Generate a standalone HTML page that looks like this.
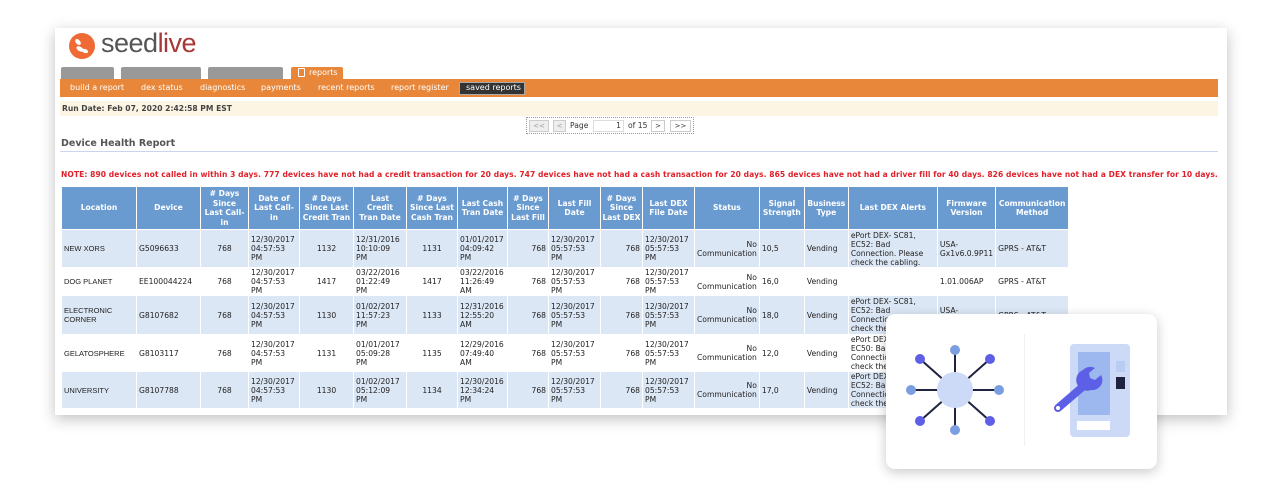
<!DOCTYPE html>
<html><head><meta charset="utf-8">
<style>
*{margin:0;padding:0;box-sizing:border-box}
body{width:1282px;height:488px;background:#fff;position:relative;overflow:hidden;font-family:"DejaVu Sans","Liberation Sans",sans-serif}
.panel{position:absolute;left:55px;top:28px;width:1172px;height:387px;background:#fff;box-shadow:0 4px 14px rgba(0,0,0,.25)}
.a{position:absolute}
.tab{position:absolute;top:67px;height:12px;background:#999;border-radius:2px 2px 0 0}
.orange{position:absolute;left:60px;top:79px;width:1158px;height:18px;background:#e8873a}
.nav{position:absolute;top:83px;font-size:8px;color:#fff;font-family:"DejaVu Sans",sans-serif}
table{position:absolute;left:61px;top:186px;border-collapse:collapse;table-layout:fixed;font-size:7.6px;color:#222}
td,th{border:1px solid #fff;padding:0 2px;line-height:9px;vertical-align:middle}
th{background:#6a9bd0;color:#fff;font-weight:bold;text-align:center;height:43px;line-height:9.5px;padding:0 1px}
tr.o td{background:#dce7f6}
td.r{text-align:right}td.c{text-align:center}
.sm{font-family:"Liberation Sans",sans-serif;font-size:7.5px}
</style></head><body>
<div class="panel"></div>
<svg class="a" style="left:68px;top:32px" width="28" height="28" viewBox="0 0 28 28"><circle cx="14" cy="14" r="13" fill="#ef6a35"/><ellipse cx="10" cy="10" rx="2.2" ry="3.5" transform="rotate(-40 10 10)" fill="#fff"/><ellipse cx="12" cy="17" rx="2.2" ry="4" transform="rotate(-60 12 17)" fill="#fff"/><ellipse cx="17" cy="19" rx="2" ry="3.2" transform="rotate(-70 17 19)" fill="#fff"/></svg>
<div class="a" style="left:101px;top:28px;font-family:'Liberation Sans',sans-serif;font-size:27px;color:#555;letter-spacing:-0.5px">seed<span style="color:#a83838">live</span></div>
<div class="tab" style="left:61px;width:53px"></div>
<div class="tab" style="left:121px;width:80px"></div>
<div class="tab" style="left:208px;width:75px"></div>
<div class="tab" style="left:291px;width:52px;background:#e8873a;height:13px"></div>
<div class="a" style="left:298px;top:68px;width:7px;height:9px;border:1px solid #fff;border-radius:1px"></div>
<div class="a" style="left:309px;top:68px;font-size:8px;color:#fff">reports</div>
<div class="orange"></div>
<div class="nav" style="left:70px">build a report</div>
<div class="nav" style="left:141px">dex status</div>
<div class="nav" style="left:200px">diagnostics</div>
<div class="nav" style="left:261px">payments</div>
<div class="nav" style="left:318px">recent reports</div>
<div class="nav" style="left:391px">report register</div>
<div class="a" style="left:459px;top:82px;width:66px;height:13px;background:#333;border:1px solid #aaa;border-radius:1px"></div>
<div class="nav" style="left:466px">saved reports</div>
<div class="a" style="left:60px;top:101px;width:1158px;height:15px;background:#fdf5e4"></div>
<div class="a" style="left:62px;top:104px;font-size:7.6px;font-weight:bold;color:#444">Run Date: Feb 07, 2020 2:42:58 PM EST</div>
<div class="a" style="left:526px;top:117px;width:168px;height:17px;border:1px dotted #999"></div>
<div class="a" style="left:529px;top:120px;width:20px;height:12px;background:#eee;border:1px solid #ccc;font-size:7px;color:#999;text-align:center;line-height:10px">&lt;&lt;</div>
<div class="a" style="left:553px;top:120px;width:13px;height:12px;background:#eee;border:1px solid #ccc;font-size:7px;color:#999;text-align:center;line-height:10px">&lt;</div>
<div class="a" style="left:570px;top:121px;font-size:7.6px;color:#333">Page</div>
<div class="a" style="left:593px;top:120px;width:31px;height:12px;border:1px solid #ddd;font-size:7.6px;color:#333;text-align:right;padding-right:2px;line-height:10px">1</div>
<div class="a" style="left:628px;top:121px;font-size:7.6px;color:#333">of 15</div>
<div class="a" style="left:651px;top:120px;width:14px;height:12px;border:1px solid #ccc;font-size:7px;color:#333;text-align:center;line-height:10px">&gt;</div>
<div class="a" style="left:670px;top:120px;width:21px;height:12px;border:1px solid #ccc;font-size:7px;color:#333;text-align:center;line-height:10px">&gt;&gt;</div>
<div class="a" style="left:61px;top:138px;font-size:9.5px;font-weight:bold;color:#555">Device Health Report</div>
<div class="a" style="left:60px;top:151px;width:1158px;height:1px;background:#c9d6ee"></div>
<div class="a" style="left:61px;top:170px;font-size:7.55px;letter-spacing:0.075px;font-weight:bold;color:#e0202a;white-space:nowrap">NOTE: 890 devices not called in within 3 days. 777 devices have not had a credit transaction for 20 days. 747 devices have not had a cash transaction for 20 days. 865 devices have not had a driver fill for 40 days. 826 devices have not had a DEX transfer for 10 days.</div>
<table>
<colgroup><col style="width:75px"><col style="width:64px"><col style="width:48px"><col style="width:51px"><col style="width:54px"><col style="width:53px"><col style="width:51px"><col style="width:50px"><col style="width:41px"><col style="width:52px"><col style="width:42px"><col style="width:52px"><col style="width:63px"><col style="width:45px"><col style="width:44px"><col style="width:89px"><col style="width:57px"><col style="width:73px"></colgroup>
<tr><th>Location</th><th>Device</th><th># Days<br>Since<br>Last Call-<br>in</th><th>Date of<br>Last Call-<br>in</th><th># Days<br>Since Last<br>Credit Tran</th><th>Last<br>Credit<br>Tran Date</th><th># Days<br>Since Last<br>Cash Tran</th><th>Last Cash<br>Tran Date</th><th># Days<br>Since<br>Last Fill</th><th>Last Fill<br>Date</th><th># Days<br>Since<br>Last DEX</th><th>Last DEX<br>File Date</th><th>Status</th><th>Signal<br>Strength</th><th>Business<br>Type</th><th>Last DEX Alerts</th><th>Firmware<br>Version</th><th>Communication<br>Method</th></tr>
<tr class="o" style="height:38px"><td class="sm">NEW XORS</td><td>G5096633</td><td class="c">768</td><td>12/30/2017<br>04:57:53<br>PM</td><td class="c">1132</td><td>12/31/2016<br>10:10:09<br>PM</td><td class="c">1131</td><td>01/01/2017<br>04:09:42<br>PM</td><td class="r">768</td><td>12/30/2017<br>05:57:53<br>PM</td><td class="r">768</td><td>12/30/2017<br>05:57:53<br>PM</td><td class="r">No<br>Communication</td><td>10,5</td><td>Vending</td><td>ePort DEX- SC81, EC52: Bad Connection. Please check the cabling.</td><td>USA-<br>Gx1v6.0.9P11</td><td>GPRS - AT&amp;T</td></tr>
<tr style="height:28px"><td class="sm">DOG PLANET</td><td>EE100044224</td><td class="c">768</td><td>12/30/2017<br>04:57:53<br>PM</td><td class="c">1417</td><td>03/22/2016<br>01:22:49<br>PM</td><td class="c">1417</td><td>03/22/2016<br>11:26:49<br>AM</td><td class="r">768</td><td>12/30/2017<br>05:57:53<br>PM</td><td class="r">768</td><td>12/30/2017<br>05:57:53<br>PM</td><td class="r">No<br>Communication</td><td>16,0</td><td>Vending</td><td></td><td>1.01.006AP</td><td>GPRS - AT&amp;T</td></tr>
<tr class="o" style="height:39px"><td class="sm">ELECTRONIC<br>CORNER</td><td>G8107682</td><td class="c">768</td><td>12/30/2017<br>04:57:53<br>PM</td><td class="c">1130</td><td>01/02/2017<br>11:57:23<br>PM</td><td class="c">1133</td><td>12/31/2016<br>12:55:20<br>AM</td><td class="r">768</td><td>12/30/2017<br>05:57:53<br>PM</td><td class="r">768</td><td>12/30/2017<br>05:57:53<br>PM</td><td class="r">No<br>Communication</td><td>18,0</td><td>Vending</td><td>ePort DEX- SC81, EC52: Bad Connection. Please check the cabling.</td><td>USA-<br>Gx1v6.0.9P11</td><td>GPRS - AT&amp;T</td></tr>
<tr style="height:37px"><td class="sm">GELATOSPHERE</td><td>G8103117</td><td class="c">768</td><td>12/30/2017<br>04:57:53<br>PM</td><td class="c">1131</td><td>01/01/2017<br>05:09:28<br>PM</td><td class="c">1135</td><td>12/29/2016<br>07:49:40<br>AM</td><td class="r">768</td><td>12/30/2017<br>05:57:53<br>PM</td><td class="r">768</td><td>12/30/2017<br>05:57:53<br>PM</td><td class="r">No<br>Communication</td><td>12,0</td><td>Vending</td><td>ePort DEX- SC81, EC50: Bad Connection. Please check the cabling.</td><td></td><td></td></tr>
<tr class="o" style="height:37px"><td class="sm">UNIVERSITY</td><td>G8107788</td><td class="c">768</td><td>12/30/2017<br>04:57:53<br>PM</td><td class="c">1130</td><td>01/02/2017<br>05:12:09<br>PM</td><td class="c">1134</td><td>12/30/2016<br>12:34:24<br>PM</td><td class="r">768</td><td>12/30/2017<br>05:57:53<br>PM</td><td class="r">768</td><td>12/30/2017<br>05:57:53<br>PM</td><td class="r">No<br>Communication</td><td>17,0</td><td>Vending</td><td>ePort DEX- SC81, EC52: Bad Connection. Please check the cabling.</td><td></td><td></td></tr>
</table>
<div class="a" style="left:886px;top:314px;width:271px;height:155px;background:#fff;border-radius:9px;box-shadow:0 3px 12px rgba(0,0,0,.22)"></div>
<div class="a" style="left:1024px;top:334px;width:1px;height:112px;background:#eef0f5"></div>
<svg class="a" style="left:905px;top:345px" width="100" height="90" viewBox="0 0 100 90">
<g stroke="#1f2340" stroke-width="2"><line x1="50" y1="2" x2="50" y2="88"/><line x1="6" y1="45" x2="94" y2="45"/><line x1="15" y1="14" x2="85" y2="76"/><line x1="85" y1="14" x2="15" y2="76"/></g>
<circle cx="50" cy="45" r="18" fill="#ccdaf7"/>
<circle cx="50" cy="5" r="5" fill="#7a9ee0"/><circle cx="50" cy="85" r="5" fill="#7a9ee0"/><circle cx="6" cy="45" r="5" fill="#7a9ee0"/><circle cx="94" cy="45" r="5" fill="#7a9ee0"/>
<circle cx="15" cy="14" r="5" fill="#5d5fe6"/><circle cx="85" cy="14" r="5" fill="#5d5fe6"/><circle cx="15" cy="76" r="5" fill="#5d5fe6"/><circle cx="85" cy="76" r="5" fill="#5d5fe6"/>
</svg>
<svg class="a" style="left:1050px;top:344px" width="80" height="96" viewBox="0 0 80 96">
<rect x="20" y="0" width="60" height="93" rx="4" fill="#ccdaf7"/>
<rect x="28" y="8" width="32" height="63" fill="#9db8ef"/>
<rect x="66" y="17" width="9" height="11" fill="#b9cdf3"/>
<rect x="66" y="33" width="9" height="12" fill="#1f2340"/>
<rect x="27" y="77" width="33" height="9" fill="#fff"/>
<path d="M8 64 L36 40" stroke="#5d5fe6" stroke-width="8" stroke-linecap="round"/>
<path d="M33 26 a10 10 0 0 0 8 20 a10 10 0 0 0 10 -15 l-6 5 l-5 -2 l-1 -5 l6 -5 a10 10 0 0 0 -12 2z" fill="#5d5fe6"/>
<circle cx="8" cy="64" r="2" fill="#fff"/>
</svg>
</body></html>
